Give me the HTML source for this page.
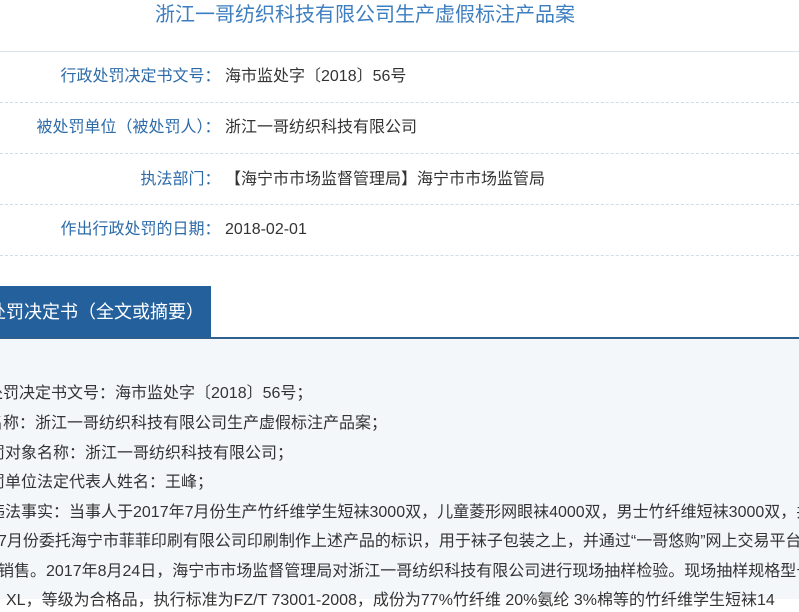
<!DOCTYPE html>
<html><head><meta charset="utf-8">
<style>
html,body{margin:0;padding:0;width:799px;height:599px;overflow:hidden;background:#fff;font-family:"Liberation Sans","Noto Sans CJK SC",sans-serif;font-size:16px;}
.abs{position:absolute;white-space:nowrap;}
.title{left:0;width:730px;top:2px;text-align:center;font-size:20px;color:#3d7ec0;line-height:26px;}
.hl{position:absolute;left:0;width:799px;height:0;}
.row{position:absolute;left:0;width:799px;line-height:22px;white-space:nowrap;}
.lab{position:absolute;right:574px;color:#2c6aa8;text-align:right;}
.val{position:absolute;left:225px;color:#333;}
.tab{position:absolute;left:0;top:286px;width:211px;height:52px;background:#23609c;color:#fff;font-size:18px;line-height:52px;}
.body{position:absolute;left:0;top:339px;width:799px;height:260px;background:#f4f7fa;}
.ln{position:absolute;white-space:nowrap;color:#333;line-height:22px;}
</style></head><body>
<div class="abs title">浙江一哥纺织科技有限公司生产虚假标注产品案</div>
<div class="hl" style="top:51px;border-top:1px solid #d8e4ee;"></div>
<div class="row" style="top:66px"><span class="lab">行政处罚决定书文号：&nbsp;</span><span class="val">海市监处字〔2018〕56号</span></div>
<div class="hl" style="top:102px;border-top:1px dashed #d0dde8;"></div>
<div class="row" style="top:117px"><span class="lab">被处罚单位（被处罚人）：&nbsp;</span><span class="val">浙江一哥纺织科技有限公司</span></div>
<div class="hl" style="top:153px;border-top:1px dashed #d0dde8;"></div>
<div class="row" style="top:169px"><span class="lab">执法部门：&nbsp;</span><span class="val">【海宁市市场监督管理局】海宁市市场监管局</span></div>
<div class="hl" style="top:204px;border-top:1px dashed #d0dde8;"></div>
<div class="row" style="top:219px"><span class="lab">作出行政处罚的日期：&nbsp;</span><span class="val">2018-02-01</span></div>
<div class="hl" style="top:255px;border-top:1px dashed #d0dde8;"></div>
<div class="tab"><span style="position:absolute;left:-12px;white-space:nowrap">处罚决定书（全文或摘要）</span></div>
<div class="hl" style="top:337px;border-top:2px solid #2f5f8c;"></div>
<div class="body">
<div class="ln" style="left:-13px;top:44px">处罚决定书文号：海市监处字〔2018〕56号；</div>
<div class="ln" style="left:-13px;top:74px">名称：浙江一哥纺织科技有限公司生产虚假标注产品案；</div>
<div class="ln" style="left:-11px;top:104px">罚对象名称：浙江一哥纺织科技有限公司；</div>
<div class="ln" style="left:-11px;top:133px">罚单位法定代表人姓名：王峰；</div>
<div class="ln" style="left:-11px;top:163px">违法事实：当事人于2017年7月份生产竹纤维学生短袜3000双，儿童菱形网眼袜4000双，男士竹纤维短袜3000双，共</div>
<div class="ln" style="left:-2px;top:192px">7月份委托海宁市菲菲印刷有限公司印刷制作上述产品的标识，用于袜子包装之上，并通过“一哥悠购”网上交易平台</div>
<div class="ln" style="left:-2px;top:222px">销售。2017年8月24日，海宁市市场监督管理局对浙江一哥纺织科技有限公司进行现场抽样检验。现场抽样规格型号</div>
<div class="ln" style="left:-10px;top:251px">：XL，等级为合格品，执行标准为FZ/T 73001-2008，成份为77%竹纤维 20%氨纶 3%棉等的竹纤维学生短袜14</div>
</div>
</body></html>
